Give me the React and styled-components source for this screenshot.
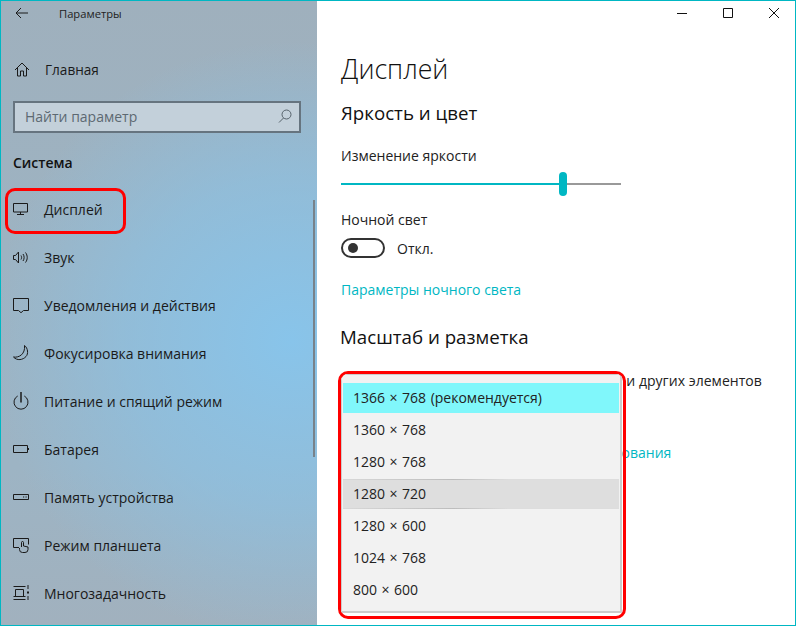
import React from "react";
import styled, { createGlobalStyle } from "styled-components";

const GlobalStyle = createGlobalStyle`
  html, body { margin: 0; padding: 0; background: #fff; }
  body { font-family: "Open Sans", "Noto Sans", sans-serif; color: #1a1a1a; }
  *, *::before, *::after { box-sizing: border-box; }
`;

const Window = styled.div`
  width: 796px;
  height: 626px;
  display: flex;
  border: 1px solid #00b7c3;
  overflow: hidden;
  background: #fff;
`;

const Sidebar = styled.aside`
  position: relative;
  width: 316px;
  flex-shrink: 0;
  display: flex;
  flex-direction: column;
  background:
    radial-gradient(ellipse 300px 300px at 290px 340px, rgba(136, 196, 234, 1) 0%, rgba(136, 196, 234, 0.55) 55%, rgba(136, 196, 234, 0) 100%),
    linear-gradient(180deg, #9fb0bd 0%, #9db3c2 40%, #9db4c4 75%, #a1b1be 100%);
`;

const SideTitleBar = styled.div`
  height: 24px;
  display: flex;
  align-items: center;
  padding-left: 14px;
  font-size: 11.2px;
  color: #222;
`;

const BackButton = styled.span`
  display: flex;
  width: 44px;
`;

const HomeRow = styled.div`
  height: 48px;
  margin-top: 20px;
  display: flex;
  align-items: center;
  padding-left: 14px;
  gap: 14px;
  font-size: 13.6px;
`;

const SearchBox = styled.div`
  margin: 8px 0 0 12px;
  width: 288px;
  height: 32px;
  border: 2px solid #66747f;
  background: #c3d0da;
  display: flex;
  align-items: center;
  justify-content: space-between;
  padding: 0 7px 2px 10px;
  font-size: 14px;
  color: #5d6972;
`;

const GroupTitle = styled.div`
  margin: 19px 0 0 12px;
  height: 22px;
  line-height: 22px;
  font-size: 14px;
  font-weight: 600;
  color: #111;
`;

const NavList = styled.nav`
  margin-top: 11px;
  display: flex;
  flex-direction: column;
`;

const NavItem = styled.div`
  position: relative;
  height: 48px;
  display: flex;
  align-items: center;
  padding-left: 12px;
  gap: 15px;
  font-size: 14px;
  color: #1a1a1a;

  ${(p) =>
    p.$marked &&
    `
    &::after {
      content: "";
      position: absolute;
      left: 4px;
      top: 3px;
      width: 121px;
      height: 46px;
      border: 3px solid #ff0000;
      border-radius: 10px;
    }
  `}
`;

const IconBox = styled.span`
  width: 16px;
  height: 16px;
  display: flex;
  flex-shrink: 0;
`;

const ScrollThumb = styled.div`
  position: absolute;
  top: 199px;
  right: 2px;
  width: 2px;
  height: 257px;
  background: #78828a;
`;

const Main = styled.main`
  position: relative;
  flex: 1;
  display: flex;
  flex-direction: column;
  padding-left: 24px;
`;

const Controls = styled.div`
  height: 30px;
  display: flex;
  justify-content: flex-end;
  margin-right: -2px;
`;

const ControlButton = styled.span`
  width: 46px;
  height: 24px;
  display: flex;
  align-items: center;
  justify-content: center;
`;

const PageTitle = styled.h1`
  margin: 20px 0 0;
  height: 36px;
  line-height: 36px;
  font-size: 26.7px;
  font-weight: 300;
  color: #111;
`;

const SectionTitle = styled.h2`
  margin: ${(p) => p.$top}px 0 0 ${(p) => p.$shift || 0}px;
  height: 26px;
  line-height: 26px;
  font-size: 18.7px;
  font-weight: 400;
  color: #111;
`;

const Label = styled.div`
  margin-top: ${(p) => p.$top}px;
  height: 20px;
  line-height: 20px;
  font-size: 14px;
  color: #222;
  white-space: nowrap;
`;

const WideLabel = styled(Label)`
  letter-spacing: 0.04px;
`;

const Slider = styled.div`
  position: relative;
  margin-top: 17px;
  width: 280px;
  height: 2px;
  background: #999;
`;

const SliderFill = styled.div`
  height: 100%;
  background: #00b7c3;
`;

const SliderThumb = styled.div`
  position: absolute;
  top: -11px;
  width: 8px;
  height: 24px;
  margin-left: -4px;
  border-radius: 4px;
  background: #00b7c3;
`;

const ToggleRow = styled.div`
  margin-top: 8px;
  display: flex;
  align-items: center;
  gap: 12px;
  font-size: 14px;
  color: #222;
`;

const Toggle = styled.div`
  width: 44px;
  height: 20px;
  border: 2px solid #333;
  border-radius: 10px;
  display: flex;
  align-items: center;
  padding-left: 5px;

  &::before {
    content: "";
    width: 10px;
    height: 10px;
    border-radius: 50%;
    background: #333;
  }
`;

const Link = styled.div`
  margin-top: ${(p) => p.$top}px;
  height: 20px;
  line-height: 20px;
  font-size: 14px;
  font-weight: 500;
  color: #00b7c3;
  white-space: nowrap;
`;

const MarkedFrame = styled.div`
  position: absolute;
  left: 21px;
  top: 370px;
  width: 288px;
  height: 248px;
  border: 3px solid #ff0000;
  border-radius: 10px;
  overflow: hidden;
`;

const Dropdown = styled.ul`
  margin: 0;
  padding: 8px 1px 0;
  list-style: none;
  width: 281px;
  height: 239px;
  background: #f2f2f2;
  border: 1px solid #ccc;
  border-width: 1px 2px 2px 1px;
`;

const Option = styled.li`
  height: 30px;
  margin-bottom: 2px;
  padding-left: 10px;
  line-height: 30px;
  font-size: 14px;
  word-spacing: 0.9px;
  color: #222;
  background: ${(p) => (p.$selected ? "#80f7fb" : "transparent")};

  ${(p) =>
    p.$hovered &&
    `
    background:
      linear-gradient(90deg, #d8d8d8 0%, #bdbdbd 40%, #dddddd 60%) 0 0 / 100% 1px no-repeat,
      linear-gradient(90deg, #d8d8d8 0%, #bdbdbd 40%, #dddddd 60%) 0 100% / 100% 1px no-repeat,
      #dedede;
  `}
`;

const Line = ({ children, ...rest }) => (
  <svg
    width="16"
    height="16"
    viewBox="0 0 16 16"
    fill="none"
    stroke="#1a1a1a"
    strokeWidth="1"
    style={{ overflow: "visible" }}
    {...rest}
  >
    {children}
  </svg>
);

const icons = {
  display: (
    <Line>
      <path d="M.5 2.500h14v8.500H.5zM7.500 11v2.500M4 13.500h7" />
    </Line>
  ),
  sound: (
    <Line>
      <path d="M.5 6.500h2l3-3.500v11l-3-3.500h-2zM8 6.500c.8 1.300.8 2.700 0 4M10 5c1.500 2.200 1.500 4.800 0 7M12.500 3.500c2.300 3 2.300 7 0 10" />
    </Line>
  ),
  notifications: (
    <Line>
      <path d="M.5 1.500h15v12h-5l-2.500 2.200-2.500-2.200h-5z" />
    </Line>
  ),
  focus: (
    <Line>
      <path d="M11.500.5C15 3 15.500 9 13 11.500 10 15 4 16 .5 12 6 13 12.500 9 11.500.5z" />
    </Line>
  ),
  power: (
    <Line>
      <path d="M4.700 3A7 7 0 1 0 11.300 3" />
      <path d="M8-1V9.500" strokeWidth="1.500" />
    </Line>
  ),
  battery: (
    <Line>
      <path d="M.5 4.500h14v7H.5z" />
      <path d="M15.500 7v2" />
    </Line>
  ),
  storage: (
    <Line>
      <path d="M.5 5.500h15v5H.5zM10 8h1.200M12.500 8h1.200" />
    </Line>
  ),
  tablet: (
    <Line>
      <path d="M6 10.500H.5v-9h15v6" />
      <path d="M8.500 10V5.500a1 1 0 0 1 2 0V9l4.500 1v2.500a3 3 0 0 1-3 3h-2.500a3 3 0 0 1-3-3V11" />
    </Line>
  ),
  multitask: (
    <Line>
      <path d="M.5 1.500h12M.5 14.500h12M2.500 4.500h8v7h-8zM.5 11.500h12M15 0v4M15 11v4" />
      <rect x="14" y="6.500" width="2" height="2" fill="#1a1a1a" stroke="none" />
    </Line>
  ),
};

const navItems = [
  { id: "display", label: "Дисплей", marked: true },
  { id: "sound", label: "Звук" },
  { id: "notifications", label: "Уведомления и действия" },
  { id: "focus", label: "Фокусировка внимания" },
  { id: "power", label: "Питание и спящий режим" },
  { id: "battery", label: "Батарея" },
  { id: "storage", label: "Память устройства" },
  { id: "tablet", label: "Режим планшета" },
  { id: "multitask", label: "Многозадачность" },
];

const resolutions = [
  "1366 × 768 (рекомендуется)",
  "1360 × 768",
  "1280 × 768",
  "1280 × 720",
  "1280 × 600",
  "1024 × 768",
  "800 × 600",
];

const App = () => {
  return (
    <>
      <GlobalStyle />
      <Window>
        <Sidebar>
          <SideTitleBar>
            <BackButton>
              <svg width="13" height="12" viewBox="0 0 13 12" fill="none" stroke="#1a1a1a" strokeWidth="1">
                <path d="M13 6H1M6 1L1 6l5 5" />
              </svg>
            </BackButton>
            Параметры
          </SideTitleBar>
          <HomeRow>
            <IconBox>
              <Line>
                <path d="M0 9l7-7 7 7M2.500 7v8h3v-5h3v5h3V7" />
              </Line>
            </IconBox>
            Главная
          </HomeRow>
          <SearchBox>
            Найти параметр
            <svg width="14" height="14" viewBox="0 0 14 14" fill="none" stroke="#56626b" strokeWidth="1">
              <circle cx="8.500" cy="5.500" r="4.500" />
              <path d="M5.500 9L1 13.500" />
            </svg>
          </SearchBox>
          <GroupTitle>Система</GroupTitle>
          <NavList>
            {navItems.map((item) => (
              <NavItem key={item.id} $marked={item.marked}>
                <IconBox>{icons[item.id]}</IconBox>
                {item.label}
              </NavItem>
            ))}
          </NavList>
          <ScrollThumb />
        </Sidebar>
        <Main>
          <Controls>
            <ControlButton>
              <svg width="10" height="10" viewBox="0 0 10 10" stroke="#111" fill="none">
                <path d="M0 5.500h10" />
              </svg>
            </ControlButton>
            <ControlButton>
              <svg width="10" height="10" viewBox="0 0 10 10" stroke="#111" fill="none">
                <path d="M.5.500h9v9h-9z" />
              </svg>
            </ControlButton>
            <ControlButton>
              <svg width="10" height="10" viewBox="0 0 10 10" stroke="#111" fill="none">
                <path d="M0 0l10 10M10 0L0 10" />
              </svg>
            </ControlButton>
          </Controls>
          <PageTitle>Дисплей</PageTitle>
          <SectionTitle $top={13}>Яркость и цвет</SectionTitle>
          <Label $top={20}>Изменение яркости</Label>
          <Slider>
            <SliderFill style={{ width: `${(222 / 280) * 100}%` }} />
            <SliderThumb style={{ left: `${(222 / 280) * 100}%` }} />
          </Slider>
          <Label $top={25}>Ночной свет</Label>
          <ToggleRow>
            <Toggle />
            Откл.
          </ToggleRow>
          <Link $top={22}>Параметры ночного света</Link>
          <SectionTitle $top={24} $shift={-1}>
            Масштаб и разметка
          </SectionTitle>
          <WideLabel $top={21}>Изменение размера текста, приложений и других элементов</WideLabel>
          <Link $top={52}>Дополнительные параметры масштабирования</Link>
          <MarkedFrame>
            <Dropdown>
              {resolutions.map((res, i) => (
                <Option key={res} $selected={i === 0} $hovered={i === 3}>
                  {res}
                </Option>
              ))}
            </Dropdown>
          </MarkedFrame>
        </Main>
      </Window>
    </>
  );
};

export default App;
